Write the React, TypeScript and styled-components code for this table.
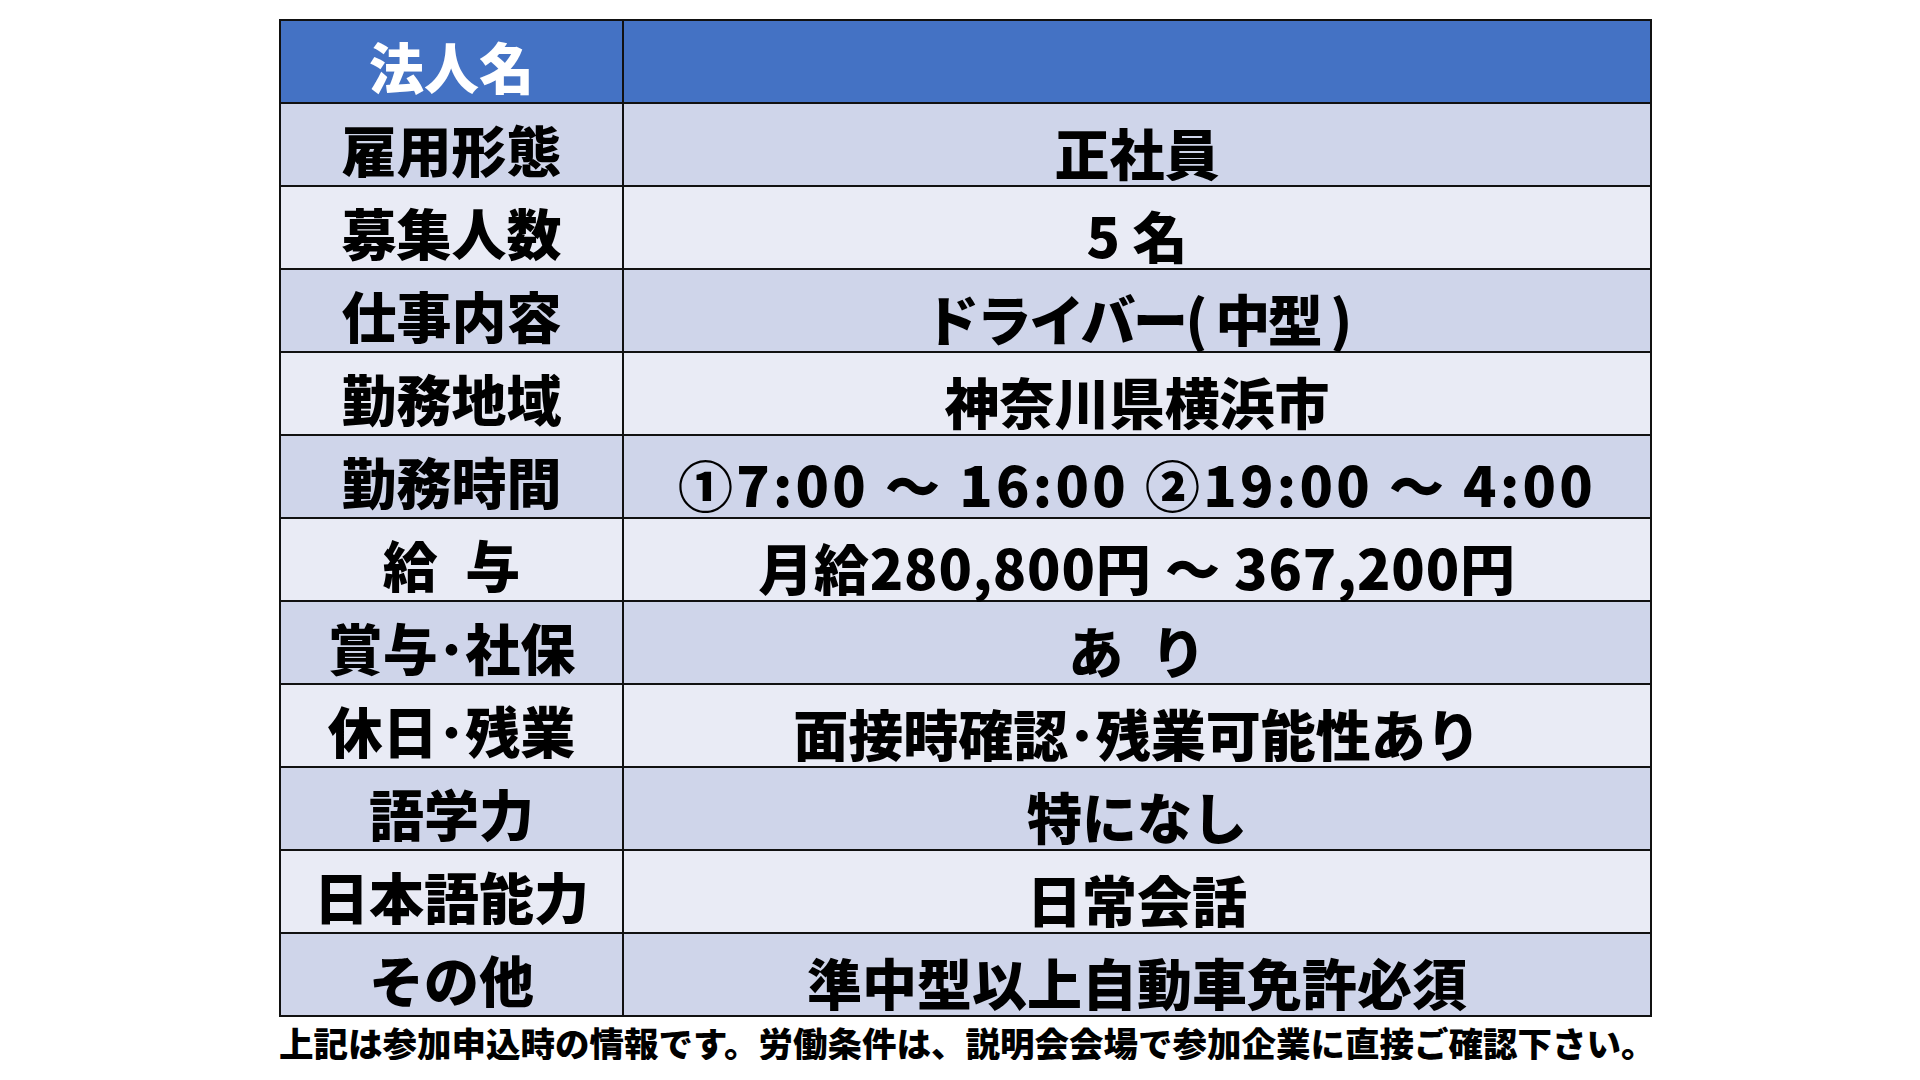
import React from 'react'
import styled, { createGlobalStyle } from 'styled-components'

const GlobalStyle = createGlobalStyle`
  html, body {
    margin: 0;
    padding: 0;
    background: #ffffff;
  }
  body {
    font-family: "Noto Sans CJK JP", "Noto Sans", sans-serif;
  }
`

interface Row {
  label: string
  value: string
  spacing?: number
}

// ･ (half width dot) keeps 賞与･社保 as narrow as in the sheet
const ROWS: Row[] = [
  { label: '雇用形態', value: '正社員' },
  { label: '募集人数', value: '5 名' },
  { label: '仕事内容', value: 'ドライバー( 中型 )', spacing: -2.5 },
  { label: '勤務地域', value: '神奈川県横浜市' },
  { label: '勤務時間', value: '①7:00 ～ 16:00 ②19:00 ～ 4:00', spacing: 3.3 },
  { label: '給\u2002与', value: '月給280,800円 ～ 367,200円', spacing: 0.8 },
  { label: '賞与･社保', value: 'あ\u2002り' },
  { label: '休日･残業', value: '面接時確認･残業可能性あり' },
  { label: '語学力', value: '特になし' },
  { label: '日本語能力', value: '日常会話' },
  { label: 'その他', value: '準中型以上自動車免許必須' },
]

export default function App() {
  return (
    <>
      <GlobalStyle />
      <Page>
        <Table>
          <HeadCell>法人名</HeadCell>
          <HeadCell />
          {ROWS.map((row, i) => (
            <React.Fragment key={row.label}>
              <LabelCell $dark={i % 2 === 0}>{row.label}</LabelCell>
              <ValueCell $dark={i % 2 === 0} $spacing={row.spacing ?? 0}>
                {row.value}
              </ValueCell>
            </React.Fragment>
          ))}
        </Table>
        <Note>
          上記は参加申込時の情報です。労働条件は、説明会会場で参加企業に直接ご確認下さい。
        </Note>
      </Page>
    </>
  )
}

const Page = styled.div`
  padding: 19px 0 0 279px;
  width: 1373px;
`

const Table = styled.div`
  display: grid;
  grid-template-columns: 341px 1fr;
  grid-auto-rows: 81px;
  gap: 2px;
  padding: 2px;
  background: #111111;
`

const Cell = styled.div`
  display: flex;
  align-items: center;
  justify-content: center;
  font-weight: 900;
  font-size: 55px;
  line-height: 1;
  color: #000000;
  white-space: nowrap;
`

const HeadCell = styled(Cell)`
  background: #4472c4;
  color: #ffffff;
  padding-top: 8px;
`

const LabelCell = styled(Cell)<{ $dark: boolean }>`
  background: ${(p) => (p.$dark ? '#cfd5ea' : '#e9ebf5')};
  padding-top: 8px;
`

const ValueCell = styled(Cell)<{ $dark: boolean; $spacing: number }>`
  background: ${(p) => (p.$dark ? '#cfd5ea' : '#e9ebf5')};
  padding-top: 14px;
  letter-spacing: ${(p) => p.$spacing}px;
`

const Note = styled.div`
  margin-top: 8px;
  font-size: 34.5px;
  font-weight: 900;
  line-height: 1;
  color: #000000;
  white-space: nowrap;
`
